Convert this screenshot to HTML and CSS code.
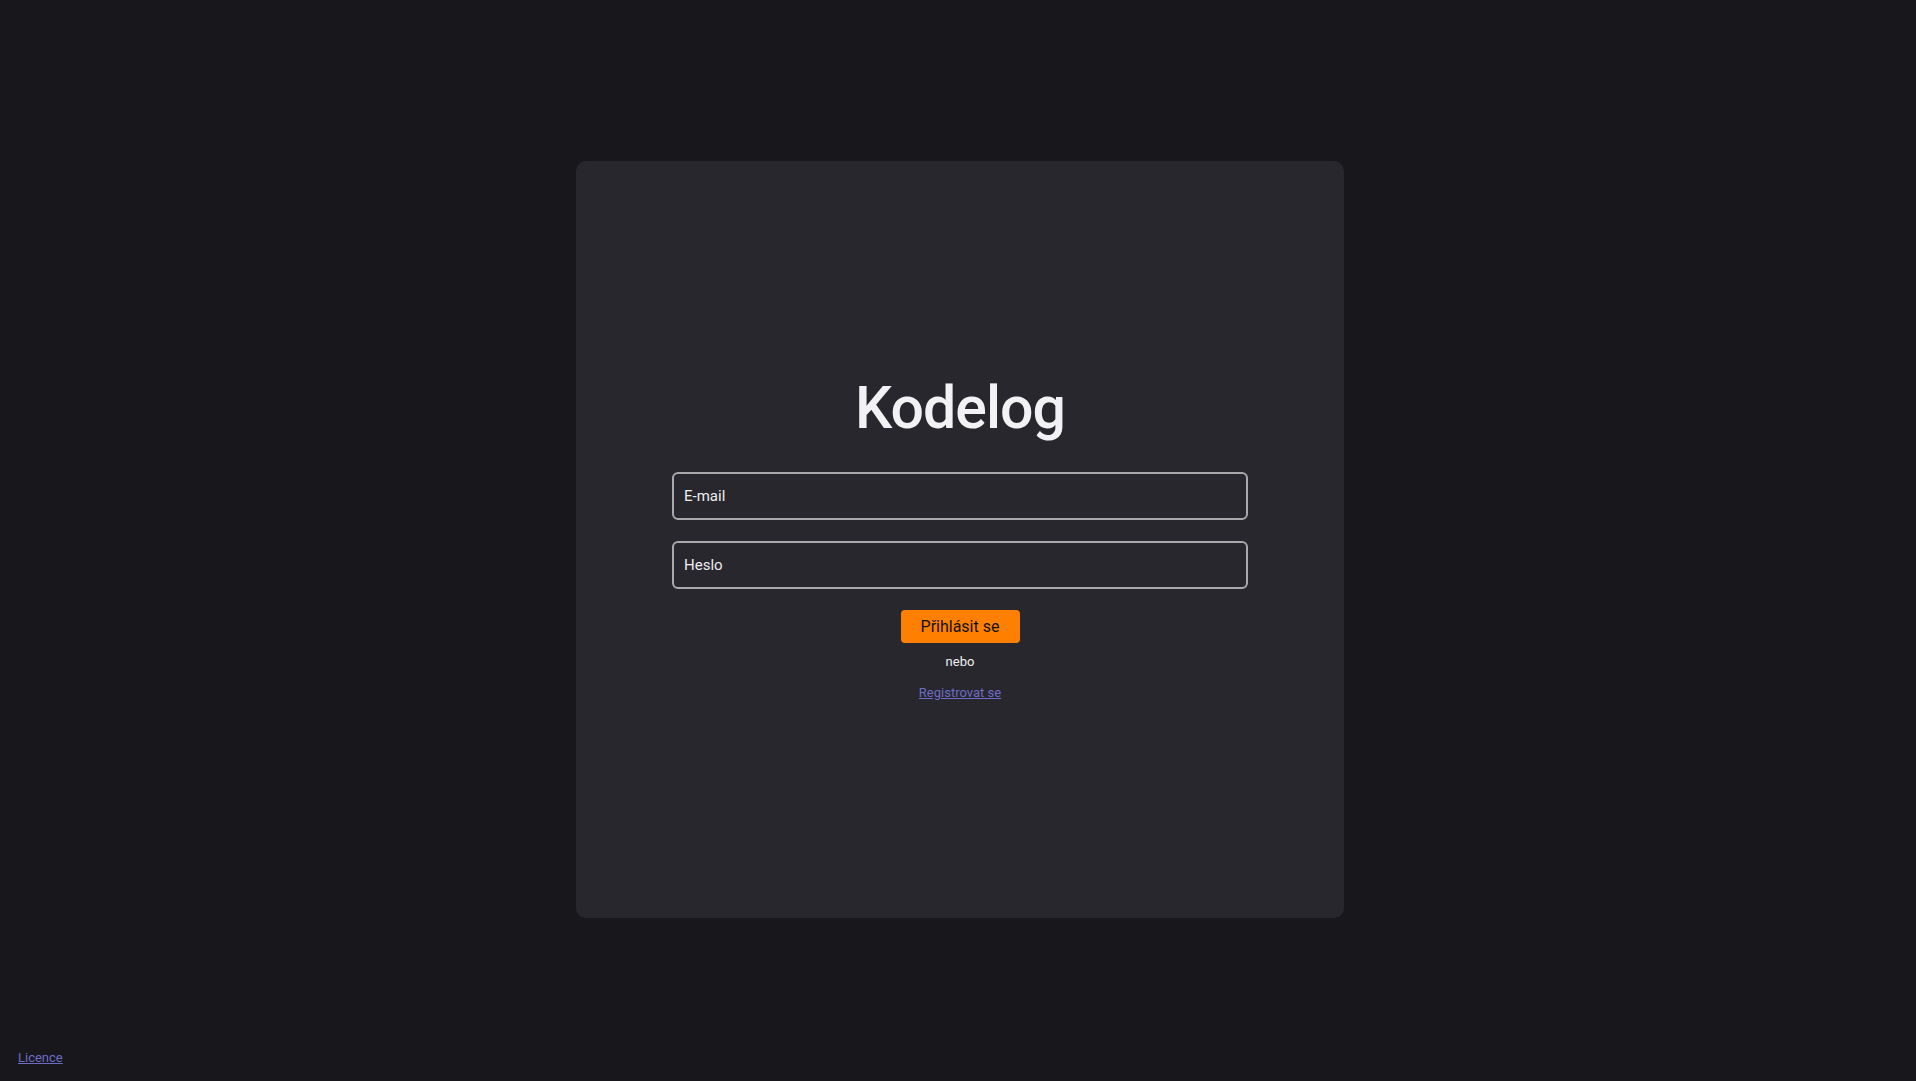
FILE: index.html
```html
<!DOCTYPE html>
<html lang="cs">
<head>
<meta charset="utf-8">
<title>Kodelog</title>
<link rel="stylesheet" href="styles.css">
</head>
<body>
<main class="page">
  <section class="card">
    <form class="login">
      <h1 class="title">Kodelog</h1>
      <input class="field" type="email" placeholder="E-mail">
      <input class="field" type="password" placeholder="Heslo">
      <button class="btn" type="button">Přihlásit se</button>
      <p class="or">nebo</p>
      <a class="link register" href="#">Registrovat se</a>
    </form>
  </section>
</main>
<footer class="footer"><a class="link" href="#">Licence</a></footer>
</body>
</html>
```

FILE: styles.css
```css
* { box-sizing: border-box; }
html, body { height: 100%; }
body {
  margin: 0;
  background: #18171c;
  color: #f0f0f2;
  font-family: Roboto, "Liberation Sans", sans-serif;
  position: relative;
}
.page {
  height: 100%;
  display: flex;
  align-items: center;
  justify-content: center;
  padding-left: 4px;
}
.card {
  width: 768px;
  height: 757px;
  margin-bottom: 2px;
  background: #28272d;
  border-radius: 10px;
  display: flex;
  align-items: center;
  justify-content: center;
}
.login {
  display: flex;
  flex-direction: column;
  align-items: center;
  width: 576px;
  margin-top: -5px;
}
.title {
  margin: 0 0 29px;
  font-size: 59px;
  line-height: 70px;
  font-weight: 500;
  letter-spacing: -1px;
  color: #f2f2f4;
}
.field {
  width: 576px;
  height: 48px;
  border: 2px solid #a9a9ab;
  border-radius: 6px;
  background: #28272d;
  color: #f0f0f2;
  font-family: inherit;
  font-size: 15px;
  padding: 0 10px;
  margin-bottom: 21px;
  outline: none;
}
.field::placeholder { color: #ededef; opacity: 1; }
.btn {
  width: 119px;
  height: 33px;
  border: none;
  border-radius: 4px;
  background: #ff8000;
  color: #111;
  font-family: inherit;
  font-size: 16px;
  padding: 0;
}
.or {
  margin: 11px 0 0;
  font-size: 13px;
  line-height: 16px;
  color: #f0f0f2;
}
.link {
  color: #6c6cc4;
  font-size: 13px;
  text-decoration: underline;
}
.register {
  margin-top: 15px;
  line-height: 16px;
}
.footer {
  position: absolute;
  left: 18px;
  bottom: 15px;
  line-height: 16px;
}
```
